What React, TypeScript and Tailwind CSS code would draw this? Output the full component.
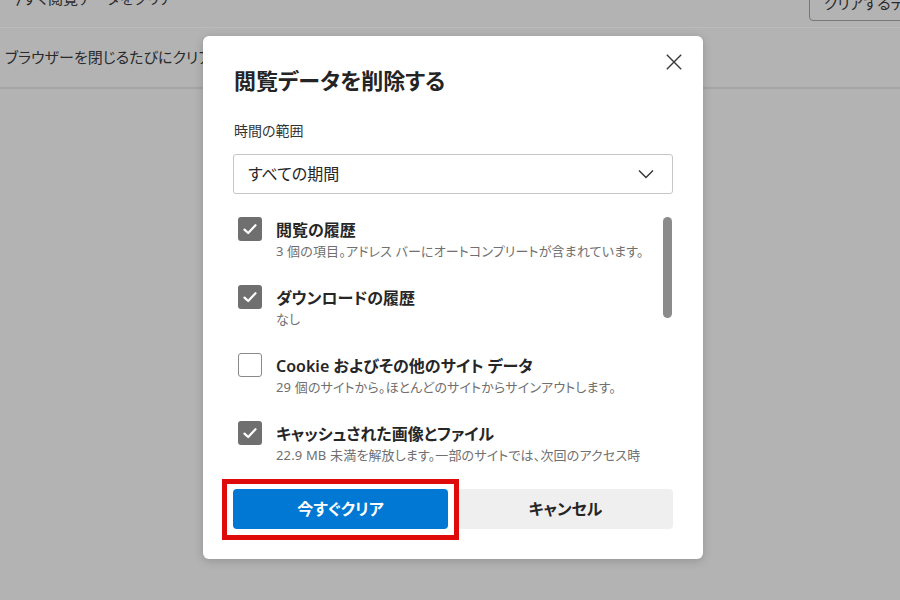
import { useState } from "react";

const FONT = "font-['Noto_Sans','Noto_Sans_CJK_JP',sans-serif] [font-feature-settings:'palt']";

const ITEMS = [
  { label: "閲覧の履歴", sub: "3 個の項目。アドレス バーにオートコンプリートが含まれています。", checked: true },
  { label: "ダウンロードの履歴", sub: "なし", checked: true },
  { label: "Cookie およびその他のサイト データ", sub: "29 個のサイトから。ほとんどのサイトからサインアウトします。", checked: false },
  {
    label: "キャッシュされた画像とファイル",
    sub: "22.9 MB 未満を解放します。一部のサイトでは、次回のアクセス時に読み込みが遅くなる可能性があります。",
    checked: true,
  },
];

function CheckBox({ checked, onClick }: { checked: boolean; onClick: () => void }) {
  return (
    <button
      onClick={onClick}
      className={`ml-[5px] flex h-[24px] w-[24px] shrink-0 items-center justify-center rounded-[3px] ${
        checked ? "bg-[#6f6f6f]" : "border border-[#8a8a8a] bg-white"
      }`}
    >
      {checked && (
        <svg width="16" height="16" viewBox="0 0 16 16" fill="none">
          <path d="M2.5 8.6 L6.2 12 L13.5 4.2" stroke="white" strokeWidth="2.2" strokeLinecap="round" strokeLinejoin="round" />
        </svg>
      )}
    </button>
  );
}

export default function App() {
  const [checks, setChecks] = useState(ITEMS.map((i) => i.checked));

  return (
    <div className={`relative h-[600px] w-[900px] overflow-hidden bg-[#b3b3b3] ${FONT}`}>
      {/* page behind the overlay */}
      <div className="mt-[-30px] flex h-[58px] items-center justify-between border-b border-[#bcbcbc] pl-[8px]">
        <span className="text-[15px] text-[#2a2a2a]">今すぐ閲覧データをクリア</span>
        <span className="mt-[9px] mr-[-92px] whitespace-nowrap rounded-[4px] border border-[#787878] px-[14px] py-[6px] text-[15px] text-[#2a2a2a]">
          クリアするデータの選択
        </span>
      </div>
      <div className="flex h-[61px] items-center border-b-2 border-[#a5a5a5] pl-[5px]">
        <span className="text-[15px] text-[#2a2a2a]">ブラウザーを閉じるたびにクリアするデータを選択する</span>
      </div>

      {/* dialog */}
      <div className="absolute left-[203px] top-[36px] flex h-[523px] w-[500px] flex-col rounded-[6px] bg-white px-[30px] pt-[30px] shadow-[0_2px_10px_rgba(0,0,0,0.18)]">
        <button className="absolute right-[17px] top-[14px] flex h-[24px] w-[24px] items-center justify-center">
          <svg width="16" height="16" viewBox="0 0 16 16" fill="none">
            <path d="M0.8 0.8 L15.2 15.2 M15.2 0.8 L0.8 15.2" stroke="#3a3a3a" strokeWidth="1.4" />
          </svg>
        </button>

        <h1 className="ml-[1px] text-[22px] font-semibold leading-[28px] text-[#242424]">閲覧データを削除する</h1>

        <div className="mt-[27px] ml-[1px] text-[14px] leading-[20px] text-[#333]">時間の範囲</div>

        <div className="mt-[13px] flex h-[40px] items-center justify-between rounded-[3px] border border-[#c6c6c6] pl-[14px] pr-[18px]">
          <span className="text-[16px] text-[#262626]">すべての期間</span>
          <svg width="16" height="10" viewBox="0 0 16 10" fill="none">
            <path d="M1 1.5 L8 8.5 L15 1.5" stroke="#333" strokeWidth="1.4" />
          </svg>
        </div>

        <div className="mt-[23px] flex h-[247px]">
          <div className="flex-1 overflow-hidden">
            {ITEMS.map((item, i) => (
              <div key={item.label} className="flex h-[68px] gap-[14px]">
                <CheckBox
                  checked={checks[i]}
                  onClick={() => setChecks((c) => c.map((v, j) => (j === i ? !v : v)))}
                />
                <div className="w-[374px] pt-[1px]">
                  <div className="text-[16px] font-semibold leading-[24px] text-[#262626]">{item.label}</div>
                  <div className="text-[13px] leading-[18px] tracking-[0.15px] text-[#707070]">{item.sub}</div>
                </div>
              </div>
            ))}
          </div>
          <div className="ml-[3px] w-[10px]">
            <div className="h-[101px] w-[9px] rounded-full bg-[#8b8b8b]" />
          </div>
        </div>

        <div className="mt-[25px] flex gap-[10px]">
          <div className="relative flex-1">
            <button className="flex h-[40px] w-full items-center justify-center rounded-[4px] bg-[#0078d4] text-[16px] font-semibold text-white">
              今すぐクリア
            </button>
            <div className="pointer-events-none absolute bottom-[-11px] left-[-11px] right-[-11px] top-[-10px] border-[5px] border-[#df0a0a]" />
          </div>
          <button className="h-[40px] flex-1 rounded-[4px] bg-[#efefef] text-[16px] font-semibold text-[#262626]">
            キャンセル
          </button>
        </div>
      </div>
    </div>
  );
}
